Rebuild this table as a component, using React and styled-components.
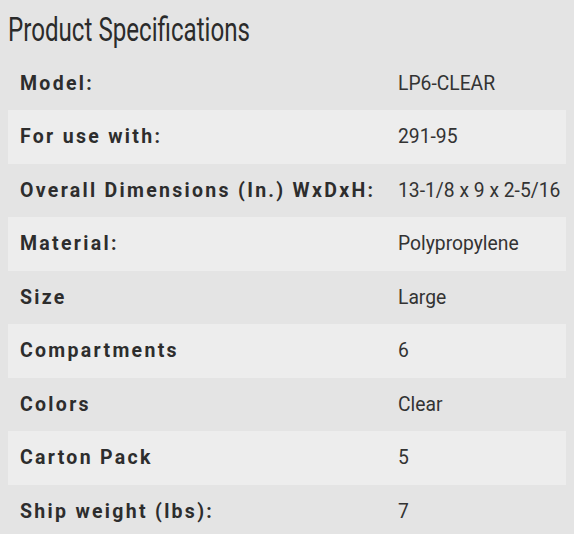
import React from "react";
import styled, { createGlobalStyle } from "styled-components";

const Global = createGlobalStyle`
  html, body { background: #e4e4e4; }
  body { margin: 8px; font-family: Roboto, "Liberation Sans", sans-serif; color: #333; }
`;

const Title = styled.h2`
  margin: 0;
  height: 48.5px;
  display: flex;
  align-items: center;
  font-family: Roboto, "Liberation Sans", sans-serif;
  font-weight: 400;
  font-size: 34px;
  color: #2b2b2b;
  letter-spacing: 0;
`;

const TitleText = styled.span`
  display: inline-block;
  white-space: nowrap;
  transform: scaleX(0.71);
  transform-origin: left center;
  margin-top: -6px;
`;

const Table = styled.div`
  display: flex;
  flex-direction: column;
`;

const Row = styled.div`
  display: grid;
  grid-template-columns: 390px 1fr;
  align-items: center;
  height: 53.5px;
  background: ${(p) => (p.$alt ? "#ededed" : "#e4e4e4")};
`;

const Label = styled.div`
  padding-left: 12px;
  font-weight: 700;
  font-size: 19.5px;
  letter-spacing: 2.3px;
  color: #2d2d2d;
  white-space: nowrap;
`;

const Value = styled.div`
  font-size: 19.3px;
  color: #333;
  white-space: nowrap;
`;

const specs = [
  ["Model:", "LP6-CLEAR"],
  ["For use with:", "291-95"],
  ["Overall Dimensions (In.) WxDxH:", "13-1/8 x 9 x 2-5/16"],
  ["Material:", "Polypropylene"],
  ["Size", "Large"],
  ["Compartments", "6"],
  ["Colors", "Clear"],
  ["Carton Pack", "5"],
  ["Ship weight (lbs):", "7"],
];

export default function App() {
  return (
    <>
      <Global />
      <Title>
        <TitleText>Product Specifications</TitleText>
      </Title>
      <Table>
        {specs.map(([k, v], i) => (
          <Row key={k} $alt={i % 2 === 1}>
            <Label>{k}</Label>
            <Value>{v}</Value>
          </Row>
        ))}
      </Table>
    </>
  );
}
